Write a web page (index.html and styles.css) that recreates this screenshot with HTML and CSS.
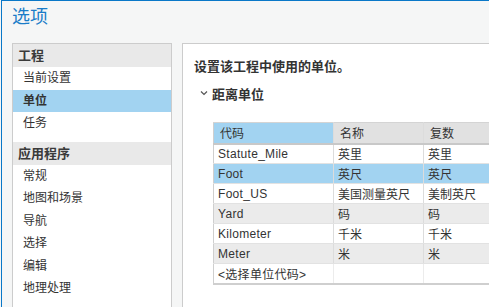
FILE: index.html
```html
<!DOCTYPE html>
<html lang="zh-CN">
<head>
    <meta charset="UTF-8">
    <title>选项</title>
    <link rel="stylesheet" href="styles.css">
</head>
<body>
    <div class="window">
        <h1 class="title">选项</h1>
        <div class="main">
            <nav class="nav">
                <div class="nav-group">工程</div>
                <div class="nav-item">当前设置</div>
                <div class="nav-item selected">单位</div>
                <div class="nav-item">任务</div>
                <div class="nav-group spaced">应用程序</div>
                <div class="nav-item">常规</div>
                <div class="nav-item">地图和场景</div>
                <div class="nav-item">导航</div>
                <div class="nav-item">选择</div>
                <div class="nav-item">编辑</div>
                <div class="nav-item">地理处理</div>
            </nav>
            <section class="content">
                <h2 class="heading">设置该工程中使用的单位。</h2>
                <div class="section-title">
                    <svg class="chevron" width="8" height="6" viewBox="0 0 8 6"><path d="M1 1.5 L4 4.5 L7 1.5" fill="none" stroke="#555" stroke-width="1.2"/></svg>
                    <span>距离单位</span>
                </div>
                <table class="units">
                    <thead>
                        <tr>
                            <th class="col-code active">代码</th>
                            <th class="col-name">名称</th>
                            <th class="col-plural">复数</th>
                        </tr>
                    </thead>
                    <tbody>
                        <tr><td>Statute_Mile</td><td>英里</td><td>英里</td></tr>
                        <tr class="selected"><td>Foot</td><td>英尺</td><td>英尺</td></tr>
                        <tr><td>Foot_US</td><td>美国测量英尺</td><td>美制英尺</td></tr>
                        <tr class="alt"><td>Yard</td><td>码</td><td>码</td></tr>
                        <tr><td>Kilometer</td><td>千米</td><td>千米</td></tr>
                        <tr class="alt"><td>Meter</td><td>米</td><td>米</td></tr>
                        <tr class="new-row"><td>&lt;选择单位代码&gt;</td><td></td><td></td></tr>
                    </tbody>
                </table>
            </section>
        </div>
    </div>
</body>
</html>
```

FILE: styles.css
```css
* {
    margin: 0;
    padding: 0;
    box-sizing: border-box;
    font-family: 'Liberation Sans', 'Noto Sans CJK SC', sans-serif;
}

body {
    background-color: #f5f6f6;
    width: 489px;
    height: 307px;
    overflow: hidden;
    color: #333;
}

/* 窗口外框 */
.window {
    margin-left: 1px;
    height: 307px;
    border-top: 1px solid #0a78c8;
    border-left: 1px solid #0a78c8;
    padding-left: 10px;
    display: flex;
    flex-direction: column;
}

.title {
    height: 42px;
    line-height: 32px;
    font-size: 18px;
    font-weight: normal;
    color: #1a7cc8;
}

.main {
    flex: 1;
    display: flex;
    gap: 10px;
    min-height: 0;
}

/* 左侧导航 */
.nav {
    width: 160px;
    background: #fff;
    border: 1px solid #ccc;
    border-bottom: none;
}

.nav-group {
    height: 23px;
    line-height: 23px;
    padding-left: 5px;
    font-size: 13px;
    font-weight: bold;
    color: #3a3a3a;
    background: #e9e9e9;
}

.nav-group.spaced {
    margin-top: 7px;
}

.nav-item {
    height: 22.5px;
    line-height: 22.5px;
    padding-left: 10px;
    font-size: 12px;
    color: #333;
}

.nav-item.selected {
    background: #a2d3f1;
    font-weight: bold;
}

/* 右侧内容 */
.content {
    flex: 1;
    background: #fff;
    border-top: 1px solid #ccc;
    border-left: 1px solid #ccc;
    overflow: hidden;
}

.heading {
    margin: 13px 0 0 11px;
    line-height: 20px;
    font-size: 13px;
    font-weight: bold;
    color: #333;
}

.section-title {
    margin: 6px 0 0 17px;
    height: 20px;
    display: flex;
    align-items: center;
    gap: 4px;
    font-size: 13px;
    font-weight: bold;
    color: #333;
}

.chevron {
    display: block;
}

.units {
    margin: 19px 0 0 30px;
    width: 330px;
    border-collapse: collapse;
    table-layout: fixed;
    font-size: 12px;
}

.units th,
.units td {
    height: 20px;
    padding: 0 4px;
    text-align: left;
    font-weight: normal;
    white-space: nowrap;
    overflow: hidden;
    border-right: 1px solid #dcdcdc;
    border-bottom: 1px solid #e2e2e2;
    color: #333;
}

.units th {
    height: 21px;
    background: #e1e1e1;
    border-top: 1px solid #d4d4d4;
    border-bottom: 2px solid #c8c8c8;
    padding-left: 6px;
}

.units td:first-child {
    border-left: 1px solid #cfcfcf;
    letter-spacing: 0.3px;
}

.units th:first-child {
    border-left: 1px solid #cfcfcf;
}

.units th.active {
    background: #a2d3f1;
}

.col-code {
    width: 120px;
}

.col-name {
    width: 90px;
}

.units tr.selected td {
    background: #a2d3f1;
}

.units tr.alt td {
    background: #ebebeb;
}

.units tr.new-row td {
    border-bottom: 2px solid #cfcfcf;
    border-right-color: #ececec;
}
```
